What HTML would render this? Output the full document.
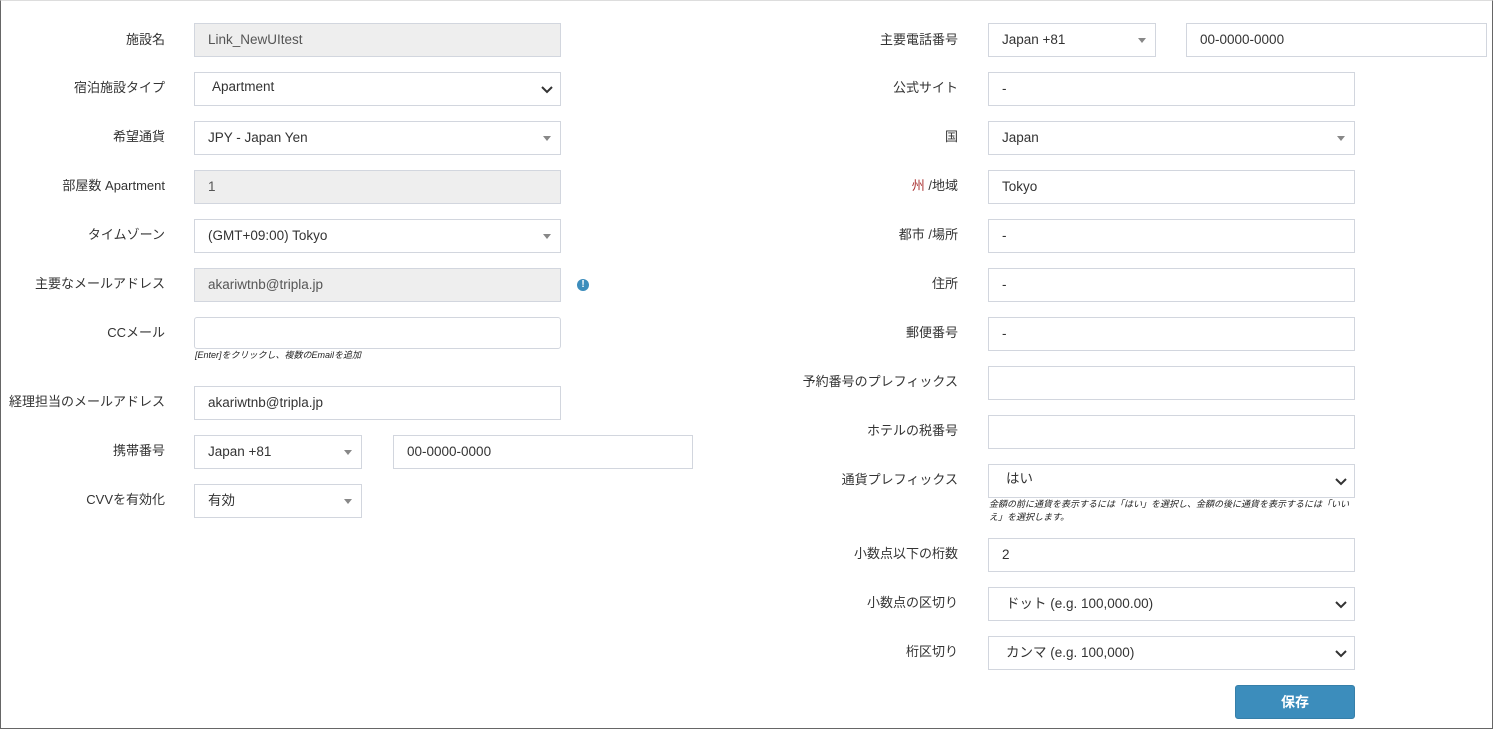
<!DOCTYPE html>
<html><head><meta charset="utf-8"><style>
*{box-sizing:border-box;margin:0;padding:0}
body{width:1496px;height:731px;background:#fff;font-family:"Liberation Sans","Noto Sans CJK JP",sans-serif;font-size:13px;color:#333;position:relative;overflow:hidden}
.frame{position:absolute;left:0;top:0;width:1493px;height:729px;border:1px solid #666;border-top-color:#ddd}
.l{position:absolute;text-align:right;color:#333;font-size:13px;line-height:16px}
.f{position:absolute;height:34px;border:1px solid #d2d6de;background:#fff;padding-left:13px;line-height:32px;font-size:13.5px;color:#333}
.f.g{background:#eee;color:#555}
.tri::after{content:"";position:absolute;right:9px;top:14px;border-left:4px solid transparent;border-right:4px solid transparent;border-top:5px solid #888}
.chev svg{position:absolute;right:6px;top:12px}
.h{position:absolute;font-size:9px;font-style:italic;color:#222;line-height:13px}
.btn{position:absolute;left:1235px;top:685px;width:120px;height:34px;background:#3c8dbc;border:1px solid #367fa9;border-radius:3px;color:#fff;text-align:center;line-height:32px;font-size:14px;font-weight:bold}
</style></head><body>
<div class="frame"></div>
<!-- left -->
<div class="l" style="right:1331px;top:32px">施設名</div>
<div class="f g" style="left:194px;top:23px;width:367px">Link_NewUItest</div>
<div class="l" style="right:1331px;top:80px">宿泊施設タイプ</div>
<div class="f chev" style="left:194px;top:72px;width:367px;padding-left:17px;line-height:28px">Apartment<svg width="14" height="10" viewBox="0 0 14 10"><path d="M2 2l5 5 5-5" stroke="#333" stroke-width="2" fill="none"/></svg></div>
<div class="l" style="right:1331px;top:129px">希望通貨</div>
<div class="f tri" style="left:194px;top:121px;width:367px">JPY - Japan Yen</div>
<div class="l" style="right:1331px;top:178px">部屋数 Apartment</div>
<div class="f g" style="left:194px;top:170px;width:367px">1</div>
<div class="l" style="right:1331px;top:227px">タイムゾーン</div>
<div class="f tri" style="left:194px;top:219px;width:367px">(GMT+09:00) Tokyo</div>
<div class="l" style="right:1331px;top:276px">主要なメールアドレス</div>
<div class="f g" style="left:194px;top:268px;width:367px">akariwtnb@tripla.jp</div>
<div style="position:absolute;left:577px;top:279px;width:12px;height:12px;border-radius:50%;background:#3c8dbc;color:#fff;font-size:10px;font-weight:bold;text-align:center;line-height:12px">!</div>
<div class="l" style="right:1331px;top:325px">CCメール</div>
<div class="f" style="left:194px;top:317px;width:367px;height:32px;border-radius:3px"></div>
<div class="h" style="left:195px;top:349px">[Enter]をクリックし、複数のEmailを追加</div>
<div class="l" style="right:1331px;top:394px">経理担当のメールアドレス</div>
<div class="f" style="left:194px;top:386px;width:367px">akariwtnb@tripla.jp</div>
<div class="l" style="right:1331px;top:443px">携帯番号</div>
<div class="f tri" style="left:194px;top:435px;width:168px">Japan +81</div>
<div class="f" style="left:393px;top:435px;width:300px">00-0000-0000</div>
<div class="l" style="right:1331px;top:492px">CVVを有効化</div>
<div class="f tri" style="left:194px;top:484px;width:168px">有効</div>
<!-- right -->
<div class="l" style="right:538px;top:32px">主要電話番号</div>
<div class="f tri" style="left:988px;top:23px;width:168px">Japan +81</div>
<div class="f" style="left:1186px;top:23px;width:301px">00-0000-0000</div>
<div class="l" style="right:538px;top:80px">公式サイト</div>
<div class="f" style="left:988px;top:72px;width:367px">-</div>
<div class="l" style="right:538px;top:129px">国</div>
<div class="f tri" style="left:988px;top:121px;width:367px">Japan</div>
<div class="l" style="right:538px;top:178px"><span style="color:#a33">州</span> /地域</div>
<div class="f" style="left:988px;top:170px;width:367px">Tokyo</div>
<div class="l" style="right:538px;top:227px">都市 /場所</div>
<div class="f" style="left:988px;top:219px;width:367px">-</div>
<div class="l" style="right:538px;top:276px">住所</div>
<div class="f" style="left:988px;top:268px;width:367px">-</div>
<div class="l" style="right:538px;top:325px">郵便番号</div>
<div class="f" style="left:988px;top:317px;width:367px">-</div>
<div class="l" style="right:538px;top:374px">予約番号のプレフィックス</div>
<div class="f" style="left:988px;top:366px;width:367px"></div>
<div class="l" style="right:538px;top:423px">ホテルの税番号</div>
<div class="f" style="left:988px;top:415px;width:367px"></div>
<div class="l" style="right:538px;top:472px">通貨プレフィックス</div>
<div class="f chev" style="left:988px;top:464px;width:367px;padding-left:17px;line-height:28px">はい<svg width="14" height="10" viewBox="0 0 14 10"><path d="M2 2l5 5 5-5" stroke="#333" stroke-width="2" fill="none"/></svg></div>
<div class="h" style="left:989px;top:498px;width:366px">金額の前に通貨を表示するには「はい」を選択し、金額の後に通貨を表示するには「いいえ」を選択します。</div>
<div class="l" style="right:538px;top:546px">小数点以下の桁数</div>
<div class="f" style="left:988px;top:538px;width:367px">2</div>
<div class="l" style="right:538px;top:595px">小数点の区切り</div>
<div class="f chev" style="left:988px;top:587px;width:367px;padding-left:17px">ドット (e.g. 100,000.00)<svg width="14" height="10" viewBox="0 0 14 10"><path d="M2 2l5 5 5-5" stroke="#333" stroke-width="2" fill="none"/></svg></div>
<div class="l" style="right:538px;top:644px">桁区切り</div>
<div class="f chev" style="left:988px;top:636px;width:367px;padding-left:17px">カンマ (e.g. 100,000)<svg width="14" height="10" viewBox="0 0 14 10"><path d="M2 2l5 5 5-5" stroke="#333" stroke-width="2" fill="none"/></svg></div>
<div class="btn">保存</div>
</body></html>
